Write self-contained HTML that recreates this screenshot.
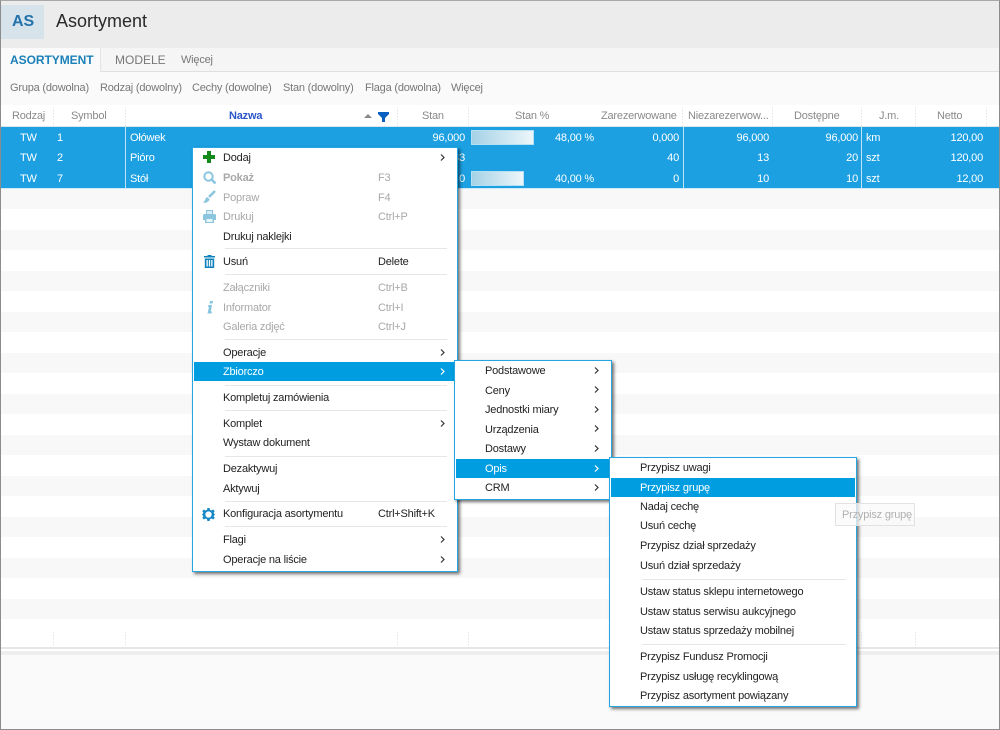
<!DOCTYPE html>
<html lang="pl"><head><meta charset="utf-8"><title>Asortyment</title>
<style>
html,body{margin:0;padding:0;width:1000px;height:730px;overflow:hidden;background:#fff}
body{font-family:"Liberation Sans",sans-serif;font-size:11px;color:#222;letter-spacing:-.2px}
div,span,svg{position:absolute}
#a{left:0;top:0;width:1000px;height:730px;filter:blur(.3px)}
span{white-space:nowrap;line-height:22px;height:22px}
.r{text-align:right}.c{text-align:center}
.st{left:1px;width:998px;background:#f8f8f8;height:20px}
.f span,.f{color:#777}
.h{color:#8a8a8a;top:105px}
.sep{width:1px;background-image:linear-gradient(#e4e4e4 50%,transparent 50%);background-size:1px 3px}
.w{color:#fff}
.menu{background:#fff;border:1px solid #25a5e2;box-shadow:2px 2px 3px rgba(0,0,0,.55);box-sizing:border-box}
.hl{background:#009ee0}
.ms{height:1px;background:#e6e6e6}
.m{color:#222}.d{color:#a8a8a8}
.ch{width:5px;height:7px}
</style></head><body><div id="a">
<div style="left:1px;top:1px;width:998px;height:47px;background:#ececec"></div>
<div style="left:1px;top:5px;width:43px;height:34px;background:#d7e3ea"></div>
<span style="left:12px;top:11px;font-size:16px;font-weight:bold;color:#2272ab;line-height:22px;height:22px;letter-spacing:0">AS</span>
<span style="left:56px;top:10px;font-size:18px;color:#2a2a2a;line-height:22px;height:22px;letter-spacing:0">Asortyment</span>
<div style="left:1px;top:48px;width:998px;height:24px;background:#f5f5f5"></div>
<div style="left:1px;top:71px;width:998px;height:1px;background:#e0e0e0"></div>
<div style="left:1px;top:48px;width:100px;height:24px;background:#fafafa;border-right:1px solid #e4e4e4;box-sizing:border-box"></div>
<span style="left:10px;top:49px;font-size:12px;font-weight:bold;color:#1b80b8;letter-spacing:-.05px">ASORTYMENT</span>
<span style="left:115px;top:49px;font-size:12px;color:#777;letter-spacing:0">MODELE</span>
<span style="left:181px;top:49px;color:#777">Więcej</span>
<div style="left:1px;top:72px;width:998px;height:33px;background:#fafafa"></div>
<span class="f" style="left:10px;top:77px">Grupa (dowolna)</span>
<span class="f" style="left:100px;top:77px">Rodzaj (dowolny)</span>
<span class="f" style="left:192px;top:77px">Cechy (dowolne)</span>
<span class="f" style="left:283px;top:77px">Stan (dowolny)</span>
<span class="f" style="left:365px;top:77px">Flaga (dowolna)</span>
<span class="f" style="left:451px;top:77px">Więcej</span>

<span class="h" style="left:12px">Rodzaj</span>
<span class="h" style="left:71px">Symbol</span>
<span style="left:229px;top:105px;color:#2b55c8;font-weight:bold">Nazwa</span>
<svg style="left:364px;top:114px" width="8" height="4"><path d="M0 4L4 0L8 4Z" fill="#888"/></svg>
<svg style="left:378px;top:112px" width="11" height="10"><path d="M0 0H11V2L7 6V10H4V6L0 2Z" fill="#0b5fc0"/></svg>
<span class="h" style="left:422px">Stan</span>
<span class="h" style="left:515px">Stan %</span>
<span class="h" style="left:601px">Zarezerwowane</span>
<span class="h" style="left:688px">Niezarezerwow...</span>
<span class="h" style="left:794px">Dostępne</span>
<span class="h" style="left:879px">J.m.</span>
<span class="h" style="left:937px">Netto</span>
<div class="sep" style="left:53px;top:107px;height:19px"></div>
<div class="sep" style="left:125px;top:107px;height:19px"></div>
<div class="sep" style="left:397px;top:107px;height:19px"></div>
<div class="sep" style="left:468px;top:107px;height:19px"></div>
<div class="sep" style="left:682px;top:107px;height:19px"></div>
<div class="sep" style="left:772px;top:107px;height:19px"></div>
<div class="sep" style="left:861px;top:107px;height:19px"></div>
<div class="sep" style="left:915px;top:107px;height:19px"></div>
<div class="sep" style="left:986px;top:107px;height:19px"></div>
<div style="left:1px;top:126px;width:998px;height:1px;background:#dde6ec"></div>

<div style="left:1px;top:127px;width:998px;height:61px;background:#1ca0e2"></div>
<div style="left:125px;top:127px;width:1px;height:61px;background:#bfe3f6"></div>
<div style="left:683px;top:127px;width:1px;height:61px;background:#bfe3f6"></div>
<div style="left:861px;top:127px;width:1px;height:61px;background:#bfe3f6"></div>
<div style="left:1px;top:188px;width:998px;height:1px;background:#cfeaf8"></div>

<div class="st" style="top:189px"></div><div class="st" style="top:230px"></div><div class="st" style="top:271px"></div>
<div class="st" style="top:312px"></div><div class="st" style="top:353px"></div><div class="st" style="top:394px"></div>
<div class="st" style="top:435px"></div><div class="st" style="top:476px"></div><div class="st" style="top:517px"></div>
<div class="st" style="top:558px"></div><div class="st" style="top:599px"></div>

<span class="w" style="left:20px;top:127px">TW</span><span class="w" style="left:57px;top:127px">1</span><span class="w" style="left:130px;top:127px">Ołówek</span>
<span class="w r" style="left:400px;width:65px;top:127px">96,000</span>
<div style="left:471px;top:130px;width:63px;height:15px;background:linear-gradient(90deg,#a5d2e6,#edf6fa);border:1px solid #b5dff3;box-sizing:border-box"></div>
<span class="w" style="left:555px;top:127px">48,00 %</span>
<span class="w r" style="left:600px;width:79px;top:127px">0,000</span><span class="w r" style="left:690px;width:79px;top:127px">96,000</span><span class="w r" style="left:780px;width:78px;top:127px">96,000</span><span class="w" style="left:866px;top:127px">km</span><span class="w r" style="left:920px;width:63px;top:127px">120,00</span>

<span class="w" style="left:20px;top:147px">TW</span><span class="w" style="left:57px;top:147px">2</span><span class="w" style="left:130px;top:147px">Pióro</span>
<span class="w r" style="left:400px;width:65px;top:147px">33</span>
<span class="w r" style="left:600px;width:79px;top:147px">40</span><span class="w r" style="left:690px;width:79px;top:147px">13</span><span class="w r" style="left:780px;width:78px;top:147px">20</span><span class="w" style="left:866px;top:147px">szt</span><span class="w r" style="left:920px;width:63px;top:147px">120,00</span>

<span class="w" style="left:20px;top:168px">TW</span><span class="w" style="left:57px;top:168px">7</span><span class="w" style="left:130px;top:168px">Stół</span>
<span class="w r" style="left:400px;width:65px;top:168px">0</span>
<div style="left:471px;top:171px;width:53px;height:15px;background:linear-gradient(90deg,#a5d2e6,#edf6fa);border:1px solid #b5dff3;box-sizing:border-box"></div>
<span class="w" style="left:555px;top:168px">40,00 %</span>
<span class="w r" style="left:600px;width:79px;top:168px">0</span><span class="w r" style="left:690px;width:79px;top:168px">10</span><span class="w r" style="left:780px;width:78px;top:168px">10</span><span class="w" style="left:866px;top:168px">szt</span><span class="w r" style="left:920px;width:63px;top:168px">12,00</span>

<div class="sep" style="left:53px;top:632px;height:16px"></div><div class="sep" style="left:125px;top:632px;height:16px"></div><div class="sep" style="left:397px;top:632px;height:16px"></div><div class="sep" style="left:468px;top:632px;height:16px"></div><div class="sep" style="left:682px;top:632px;height:16px"></div><div class="sep" style="left:772px;top:632px;height:16px"></div><div class="sep" style="left:861px;top:632px;height:16px"></div><div class="sep" style="left:915px;top:632px;height:16px"></div>
<div style="left:1px;top:647px;width:998px;height:2px;background:#e6e6e6"></div>
<div style="left:1px;top:651px;width:998px;height:4px;background:#eeeeee"></div>
<div style="left:1px;top:655px;width:998px;height:74px;background:#fafafa"></div>

<!-- menu 1 -->
<div class="menu" style="left:192px;top:147px;width:266px;height:425px"></div>
<div class="hl" style="left:194px;top:362px;width:262px;height:19px"></div>
<svg style="left:203px;top:151px" width="12" height="12"><path d="M4 0H8V4H12V8H8V12H4V8H0V4H4Z" fill="#128a1c"/></svg>
<svg style="left:203px;top:171px" width="13" height="13" fill="none" stroke="#8cc6de" stroke-width="2"><circle cx="5.5" cy="5.5" r="4.2"/><path d="M8.5 8.5L12.5 12.5" stroke-width="2.6"/></svg>
<svg style="left:203px;top:190px" width="13" height="13" fill="none"><path d="M12 1L6 7" stroke="#8cc6de" stroke-width="2.6"/><path d="M4 7L6.5 9C6 12 3 13.500 0 12.500C2 11.500 2 8.500 4 7Z" fill="#8cc6de"/></svg>
<svg style="left:203px;top:210px" width="13" height="13"><path d="M3 0H10V4H12Q13 4 13 6V10H11V13H2V10H0V6Q0 4 1 4H3Z" fill="#8cc6de"/><path d="M4 1H9V4H4Z" fill="#d8edf5"/><path d="M3.500 9H9.500V12H3.500Z" fill="#eaf5fa"/></svg>
<svg style="left:204px;top:255px" width="11" height="13"><path d="M3.500 0H7.500V1H11V2.500H0V1H3.500Z M.8 3.500H10.200V13H.8Z" fill="#0f82bd"/><path d="M2.500 5H3.800V11.500H2.500Z M4.850 5H6.150V11.500H4.850Z M7.200 5H8.500V11.500H7.200Z" fill="#fff"/></svg>
<svg style="left:207px;top:301px" width="6" height="13"><path d="M3 0H6L5.500 2.500H2.500Z M1.500 4H5L3.800 10.500H5L4.500 12.500H0.500L2 6H1Z" fill="#86c5e0"/></svg>
<svg style="left:202px;top:508px" width="13" height="13" viewBox="0 0 14 14"><path d="M5.800 0H8.200L8.600 2L10.300 2.700L12 1.600L13.700 3.300L12.500 5L13.200 6.200L14 7L13.200 7.800L12.500 9L13.700 10.700L12 12.400L10.300 11.300L8.600 12L8.200 14H5.800L5.400 12L3.700 11.300L2 12.400L.3 10.700L1.500 9L.8 7.800L0 7L.8 6.200L1.500 5L.3 3.300L2 1.600L3.700 2.700L5.400 2Z" fill="#1589c6"/><circle cx="7" cy="7" r="3.400" fill="#fff"/></svg>

<span class="m" style="left:223px;top:147px">Dodaj</span>
<span class="d" style="left:223px;top:167px;font-weight:bold">Pokaż</span><span class="d" style="left:378px;top:167px">F3</span>
<span class="d" style="left:223px;top:187px">Popraw</span><span class="d" style="left:378px;top:187px">F4</span>
<span class="d" style="left:223px;top:206px">Drukuj</span><span class="d" style="left:378px;top:206px">Ctrl+P</span>
<span class="m" style="left:223px;top:226px">Drukuj naklejki</span>
<div class="ms" style="left:225px;top:248px;width:222px"></div>
<span class="m" style="left:223px;top:251px">Usuń</span><span class="m" style="left:378px;top:251px">Delete</span>
<div class="ms" style="left:225px;top:274px;width:222px"></div>
<span class="d" style="left:223px;top:277px">Załączniki</span><span class="d" style="left:378px;top:277px">Ctrl+B</span>
<span class="d" style="left:223px;top:297px">Informator</span><span class="d" style="left:378px;top:297px">Ctrl+I</span>
<span class="d" style="left:223px;top:316px">Galeria zdjęć</span><span class="d" style="left:378px;top:316px">Ctrl+J</span>
<div class="ms" style="left:225px;top:339px;width:222px"></div>
<span class="m" style="left:223px;top:342px">Operacje</span>
<span class="w" style="left:223px;top:361px">Zbiorczo</span>
<div class="ms" style="left:225px;top:385px;width:222px"></div>
<span class="m" style="left:223px;top:387px">Kompletuj zamówienia</span>
<div class="ms" style="left:225px;top:410px;width:222px"></div>
<span class="m" style="left:223px;top:413px">Komplet</span>
<span class="m" style="left:223px;top:432px">Wystaw dokument</span>
<div class="ms" style="left:225px;top:456px;width:222px"></div>
<span class="m" style="left:223px;top:458px">Dezaktywuj</span>
<span class="m" style="left:223px;top:478px">Aktywuj</span>
<div class="ms" style="left:225px;top:501px;width:222px"></div>
<span class="m" style="left:223px;top:503px">Konfiguracja asortymentu</span><span class="m" style="left:378px;top:503px">Ctrl+Shift+K</span>
<div class="ms" style="left:225px;top:526px;width:222px"></div>
<span class="m" style="left:223px;top:529px">Flagi</span>
<span class="m" style="left:223px;top:549px">Operacje na liście</span>
<svg class="ch" style="left:440px;top:154px"><path d="M1 0.500L4 3.500L1 6.500" fill="none" stroke="#333" stroke-width="1.200"/></svg>
<svg class="ch" style="left:440px;top:349px"><path d="M1 0.500L4 3.500L1 6.500" fill="none" stroke="#333" stroke-width="1.200"/></svg>
<svg class="ch" style="left:440px;top:368px"><path d="M1 0.500L4 3.500L1 6.500" fill="none" stroke="#fff" stroke-width="1.200"/></svg>
<svg class="ch" style="left:440px;top:420px"><path d="M1 0.500L4 3.500L1 6.500" fill="none" stroke="#333" stroke-width="1.200"/></svg>
<svg class="ch" style="left:440px;top:536px"><path d="M1 0.500L4 3.500L1 6.500" fill="none" stroke="#333" stroke-width="1.200"/></svg>
<svg class="ch" style="left:440px;top:556px"><path d="M1 0.500L4 3.500L1 6.500" fill="none" stroke="#333" stroke-width="1.200"/></svg>

<!-- menu 2 -->
<div class="menu" style="left:454px;top:360px;width:158px;height:140px"></div>
<div class="hl" style="left:456px;top:459px;width:154px;height:19px"></div>
<span class="m" style="left:485px;top:360px">Podstawowe</span>
<span class="m" style="left:485px;top:380px">Ceny</span>
<span class="m" style="left:485px;top:399px">Jednostki miary</span>
<span class="m" style="left:485px;top:419px">Urządzenia</span>
<span class="m" style="left:485px;top:438px">Dostawy</span>
<span class="w" style="left:485px;top:458px">Opis</span>
<span class="m" style="left:485px;top:477px">CRM</span>
<svg class="ch" style="left:594px;top:367px"><path d="M1 0.500L4 3.500L1 6.500" fill="none" stroke="#333" stroke-width="1.200"/></svg>
<svg class="ch" style="left:594px;top:386px"><path d="M1 0.500L4 3.500L1 6.500" fill="none" stroke="#333" stroke-width="1.200"/></svg>
<svg class="ch" style="left:594px;top:406px"><path d="M1 0.500L4 3.500L1 6.500" fill="none" stroke="#333" stroke-width="1.200"/></svg>
<svg class="ch" style="left:594px;top:425px"><path d="M1 0.500L4 3.500L1 6.500" fill="none" stroke="#333" stroke-width="1.200"/></svg>
<svg class="ch" style="left:594px;top:445px"><path d="M1 0.500L4 3.500L1 6.500" fill="none" stroke="#333" stroke-width="1.200"/></svg>
<svg class="ch" style="left:594px;top:465px"><path d="M1 0.500L4 3.500L1 6.500" fill="none" stroke="#fff" stroke-width="1.200"/></svg>
<svg class="ch" style="left:594px;top:484px"><path d="M1 0.500L4 3.500L1 6.500" fill="none" stroke="#333" stroke-width="1.200"/></svg>

<!-- menu 3 -->
<div class="menu" style="left:609px;top:457px;width:248px;height:250px"></div>
<div class="hl" style="left:611px;top:478px;width:244px;height:19px"></div>
<span class="m" style="left:640px;top:457px">Przypisz uwagi</span>
<span class="w" style="left:640px;top:477px">Przypisz grupę</span>
<span class="m" style="left:640px;top:496px">Nadaj cechę</span>
<span class="m" style="left:640px;top:515px">Usuń cechę</span>
<span class="m" style="left:640px;top:535px">Przypisz dział sprzedaży</span>
<span class="m" style="left:640px;top:555px">Usuń dział sprzedaży</span>
<div class="ms" style="left:642px;top:579px;width:204px"></div>
<span class="m" style="left:640px;top:581px">Ustaw status sklepu internetowego</span>
<span class="m" style="left:640px;top:601px">Ustaw status serwisu aukcyjnego</span>
<span class="m" style="left:640px;top:620px">Ustaw status sprzedaży mobilnej</span>
<div class="ms" style="left:642px;top:644px;width:204px"></div>
<span class="m" style="left:640px;top:646px">Przypisz Fundusz Promocji</span>
<span class="m" style="left:640px;top:666px">Przypisz usługę recyklingową</span>
<span class="m" style="left:640px;top:685px">Przypisz asortyment powiązany</span>

<!-- tooltip -->
<div style="left:835px;top:503px;width:80px;height:23px;background:rgba(250,250,250,.75);border:1px solid #e2e2e2;box-sizing:border-box"></div>
<span style="left:842px;top:504px;color:#b0b0b0">Przypisz grupę</span>

<!-- window frame -->
<div style="left:0;top:0;width:1000px;height:730px;box-sizing:border-box;border:1px solid #8c8c8c;border-top-color:#a8a8a8"></div>
</div></body></html>
